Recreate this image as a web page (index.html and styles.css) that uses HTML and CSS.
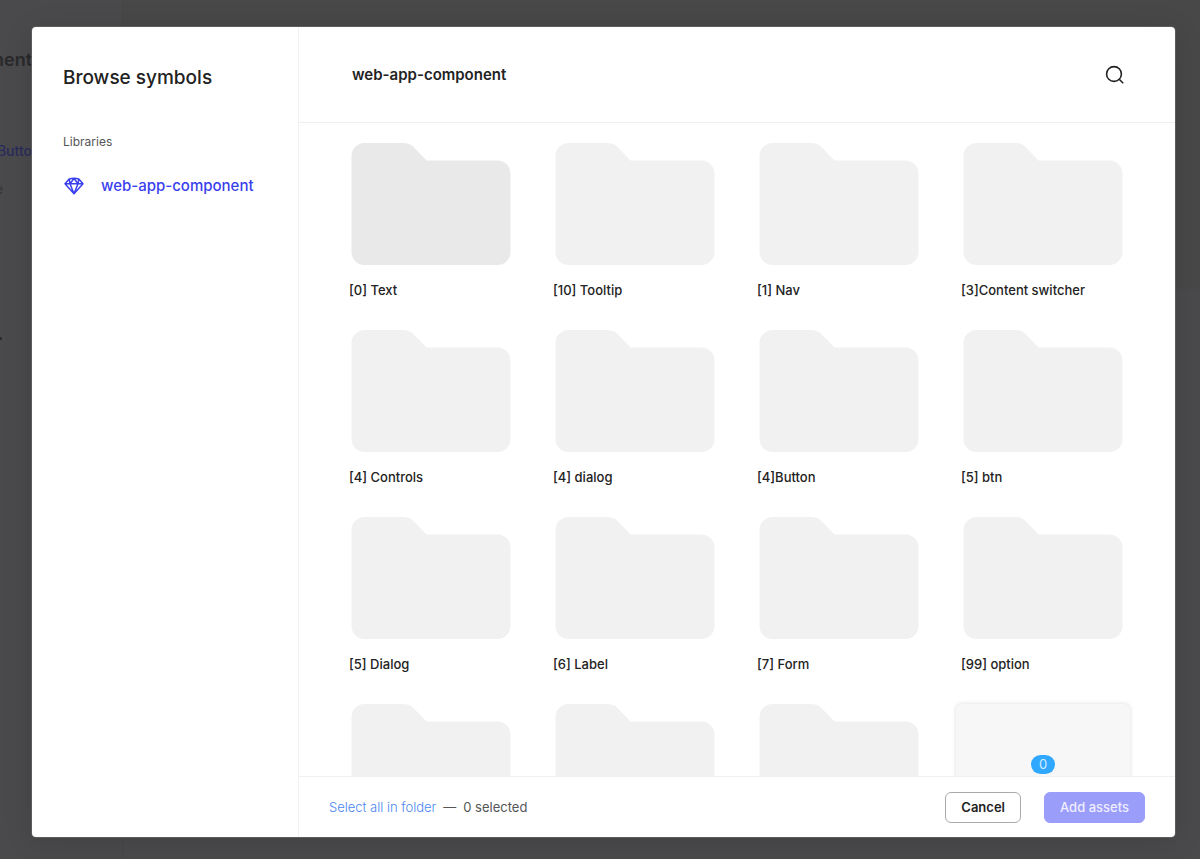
FILE: index.html
```html
<!DOCTYPE html>
<html lang="en">
<head>
  <meta charset="UTF-8">
  <meta name="viewport" content="width=device-width, initial-scale=1.0">
  <title>Browse symbols</title>
  <link rel="stylesheet" href="styles.css">
</head>
<body>
  <!-- Page under the overlay -->
  <div class="page" aria-hidden="true">
    <div class="page-side">
      <div class="page-title"><span>nent</span></div>
      <div class="page-link"><span>Butto</span></div>
      <div class="page-note"><span>e</span></div>
      <div class="page-arrow"></div>
    </div>
    <div class="page-main"></div>
  </div>

  <!-- Shared shapes -->
  <svg class="shapes" width="0" height="0">
    <symbol id="folder" viewBox="0 0 159 122">
      <path d="M13 0H51C56 0 59 1 62 4L75 17.5H146A13 13 0 0 1 159 30.5V109A13 13 0 0 1 146 122H13A13 13 0 0 1 0 109V13A13 13 0 0 1 13 0Z"/>
    </symbol>
  </svg>

  <div class="modal" role="dialog" aria-labelledby="modalTitle">
    <aside class="sidebar">
      <h1 id="modalTitle">Browse symbols</h1>
      <h2>Libraries</h2>
      <a class="library" href="#">
        <svg width="20" height="18" viewBox="0 0 20 18">
          <path d="M5.2 2Q10 0.4 14.8 2L19 6.7L10 16.7L1 6.7Z M1 6.7H19 M5.2 2L6 6.7L10 16.7L14 6.7L14.8 2 M6 6.7L10 1.5L14 6.7"/>
        </svg>
        <span>web-app-component</span>
      </a>
    </aside>

    <main class="content">
      <header class="header">
        <h2>web-app-component</h2>
        <button class="search" aria-label="Search">
          <svg width="20" height="20" viewBox="0 0 20 20">
            <circle cx="9" cy="9" r="7.4"/>
            <path d="M14.2 14.2L18.2 18.2"/>
          </svg>
        </button>
      </header>

      <div class="grid">
        <button class="folder active"><svg><use href="#folder"/></svg><span>[0] Text</span></button>
        <button class="folder"><svg><use href="#folder"/></svg><span>[10] Tooltip</span></button>
        <button class="folder"><svg><use href="#folder"/></svg><span>[1] Nav</span></button>
        <button class="folder"><svg><use href="#folder"/></svg><span>[3]Content switcher</span></button>
        <button class="folder"><svg><use href="#folder"/></svg><span>[4] Controls</span></button>
        <button class="folder"><svg><use href="#folder"/></svg><span>[4] dialog</span></button>
        <button class="folder"><svg><use href="#folder"/></svg><span>[4]Button</span></button>
        <button class="folder"><svg><use href="#folder"/></svg><span>[5] btn</span></button>
        <button class="folder"><svg><use href="#folder"/></svg><span>[5] Dialog</span></button>
        <button class="folder"><svg><use href="#folder"/></svg><span>[6] Label</span></button>
        <button class="folder"><svg><use href="#folder"/></svg><span>[7] Form</span></button>
        <button class="folder"><svg><use href="#folder"/></svg><span>[99] option</span></button>
        <button class="folder" aria-label="Folder"><svg><use href="#folder"/></svg></button>
        <button class="folder" aria-label="Folder"><svg><use href="#folder"/></svg></button>
        <button class="folder" aria-label="Folder"><svg><use href="#folder"/></svg></button>
        <button class="symbol"><span class="badge">0</span></button>
      </div>

      <footer class="footer">
        <a href="#">Select all in folder</a>
        <span class="dash">—</span>
        <span class="count">0 selected</span>
        <button class="btn">Cancel</button>
        <button class="btn primary">Add assets</button>
      </footer>
    </main>
  </div>
</body>
</html>
```

FILE: styles.css
```css
* {
  box-sizing: border-box;
}

body {
  margin: 0;
  height: 100vh;
  display: flex;
  padding: 27px 25px 22px 32px;
  overflow: hidden;
  background: #4a4a4c;
  color: #222;
  font-family: Inter, "Liberation Sans", sans-serif;
  font-size: 13px;
}

h1, h2 {
  margin: 0;
}

button {
  font: inherit;
  color: inherit;
  border: none;
  background: none;
  padding: 0;
  cursor: pointer;
}

a {
  text-decoration: none;
}

.shapes {
  position: absolute;
}

/* Dimmed page */
.page {
  position: absolute;
  inset: 0;
  display: flex;
}

.page-side {
  width: 123px;
  padding-top: 48px;
  border-right: 1px solid #464648;
}

.page-side div {
  width: 32px;
  height: 24px;
  line-height: 24px;
  display: flex;
  justify-content: flex-end;
}

.page-title {
  font-size: 18px;
  font-weight: 600;
  color: #29292b;
}

.page-side .page-link {
  margin-top: 67px;
  font-size: 14px;
  font-weight: 500;
  color: #292a5c;
}

.page-side .page-note {
  width: 3px;
  margin-top: 14px;
  color: #333;
}

.page-side .page-arrow {
  width: 2px;
  height: 3px;
  margin-top: 136px;
  background: #2c2c2e;
}

.page-main {
  flex: 1;
  height: 289px;
  background: #484849;
}

/* Modal */
.modal {
  position: relative;
  flex: 1;
  min-width: 0;
  display: flex;
  background: #fff;
  border-radius: 4px;
  overflow: hidden;
  box-shadow: 0 0 0 1px #5c5c5e, 0 4px 30px rgba(0, 0, 0, 0.12);
}

.sidebar {
  width: 267px;
  padding: 39px 31px;
  border-right: 1px solid #f1f1f1;
}

.sidebar h1 {
  font-size: 19px;
  line-height: 24px;
  font-weight: 500;
  white-space: nowrap;
}

.sidebar h2 {
  margin-top: 43px;
  font-size: 12px;
  line-height: 18px;
  font-weight: 400;
  color: #555;
}

.library {
  margin-top: 23px;
  padding-left: 1px;
  display: flex;
  align-items: center;
  gap: 17px;
  font-size: 15px;
  line-height: 24px;
  font-weight: 500;
  color: #3a3fee;
  white-space: nowrap;
}

.library svg {
  flex: none;
  fill: none;
  stroke: #3a3fee;
  stroke-width: 1.5;
  stroke-linejoin: round;
}

.content {
  flex: 1;
  min-width: 0;
  display: flex;
  flex-direction: column;
}

.header {
  height: 96px;
  flex: none;
  padding: 0 50px 0 53px;
  display: flex;
  align-items: center;
  justify-content: space-between;
  border-bottom: 1px solid #eee;
}

.header h2 {
  font-size: 15px;
  font-weight: 600;
}

.search {
  height: 20px;
}

.search svg {
  display: block;
  fill: none;
  stroke: #222;
  stroke-width: 1.6;
}

.grid {
  flex: 1;
  min-height: 0;
  padding: 20px 44px;
  display: grid;
  grid-template-columns: repeat(4, 1fr);
  grid-auto-rows: 158px;
  gap: 29px 28px;
  overflow: hidden;
}

.folder {
  display: flex;
  flex-direction: column;
  justify-content: flex-start;
  text-align: left;
}

.folder svg {
  flex: none;
  width: 100%;
  height: 122px;
  fill: #f1f1f1;
}

.folder.active svg {
  fill: #e9e9e9;
}

.folder span {
  margin-top: 15px;
  padding-left: 6px;
  font-size: 13px;
  line-height: 20px;
  font-weight: 500;
}

.symbol {
  height: 120px;
  margin: 0 1px;
  background: #f7f7f7;
  border-radius: 6px;
  box-shadow: 0 0 4px rgba(0, 0, 0, 0.15);
}

.badge {
  display: inline-block;
  width: 24px;
  height: 19px;
  line-height: 19px;
  border-radius: 10px;
  background: #31a8ff;
  color: #d3edff;
  font-size: 13px;
}

.footer {
  flex: none;
  height: 61px;
  padding: 0 30px;
  display: flex;
  align-items: center;
  border-top: 1px solid #f1f1f1;
}

.footer a {
  color: #4a86f0;
  font-weight: 300;
}

.dash {
  margin: 0 7px;
  color: #555;
}

.count {
  margin-right: auto;
  color: #555;
}

.btn {
  height: 31px;
  padding: 0 15px;
  border: 1px solid #aaa;
  border-radius: 6px;
  font-size: 13px;
  font-weight: 600;
}

.btn.primary {
  margin-left: 23px;
  border-color: #9b9dfa;
  background: #9b9dfa;
  color: #eeeeff;
  font-weight: 500;
}
```
